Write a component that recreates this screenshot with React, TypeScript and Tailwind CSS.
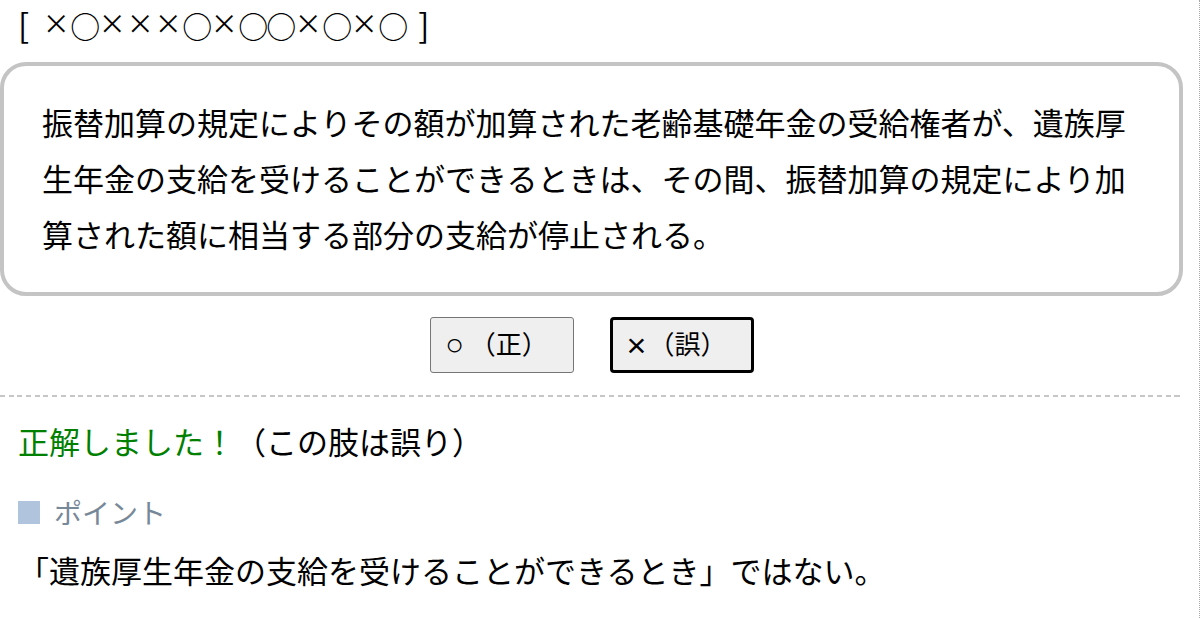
import React from 'react';

const jp = { fontFamily: '"Noto Sans CJK JP", "Noto Sans", sans-serif' };
const btnFont = { fontFamily: '"Liberation Sans", "Noto Sans CJK JP", sans-serif' };

const App: React.FC = () => {
  const history = '×○×××○×○○×○×○'.split('');

  return (
    <div
      className="w-[1200px] h-[618px] overflow-hidden bg-white text-black border-r border-dotted border-[#a8a8a8] pr-[16px]"
      style={jp}
    >
      {/* history */}
      <div className="pl-[18px] h-[50px] flex items-center text-[31px]">
        <span className="text-[33px]">[</span>
        <span className="ml-[13px] flex">
          {history.map((c, i) => (
            <span
              key={i}
              className={c === '×' ? 'inline-block w-[28px] text-center text-[27px]' : 'inline-block w-[28px] text-center text-[30px]'}
            >
              {c}
            </span>
          ))}
        </span>
        <span className="ml-[12px] text-[33px]">]</span>
      </div>

      {/* question */}
      <div className="mt-[12px] border-4 border-[#c4c4c4] rounded-[26px] pl-[38px] pr-[30px] pt-[28px] pb-[30px]">
        <p className="text-[31px] leading-[56px]">
          振替加算の規定によりその額が加算された老齢基礎年金の受給権者が、遺族厚生年金の支給を受けることができるときは、その間、振替加算の規定により加算された額に相当する部分の支給が停止される。
        </p>
      </div>

      {/* answer buttons */}
      <div className="mt-[21px] flex justify-center gap-[36px]">
        <button
          className="w-[144px] h-[56px] bg-[#efefef] border border-[#767676] rounded-[3px] text-[26px] flex items-center justify-center pr-[10px]"
          style={btnFont}
        >
          <span className="text-[31px] mr-[6px]">○</span>（正）
        </button>
        <button
          className="w-[144px] h-[56px] bg-[#efefef] border-[3px] border-black rounded-[4px] text-[26px] flex items-center justify-center pr-[10px]"
          style={btnFont}
        >
          <span className="text-[34px] mr-[2px]">×</span>（誤）
        </button>
      </div>

      <div className="mt-[22px] h-[2px] bg-[repeating-linear-gradient(90deg,#c6c6c6_0px,#c6c6c6_5px,transparent_5px,transparent_8.7px)]" />

      {/* result */}
      <div className="mt-[19px] pl-[18px] text-[31px] leading-[50px]">
        <span className="text-[#008000]">正解しました！</span>（この肢は誤り）
      </div>

      <div className="mt-[21px] pl-[18px] flex items-center gap-[14px] leading-[50px]">
        <span className="w-[22px] h-[23px] bg-[#b0c4de]" />
        <span className="text-[28px] text-[#778899]">ポイント</span>
      </div>

      <div className="mt-[8px] pl-[18px] text-[31px] leading-[50px]">
        「遺族厚生年金の支給を受けることができるとき」ではない。
      </div>
    </div>
  );
};

export default App;
